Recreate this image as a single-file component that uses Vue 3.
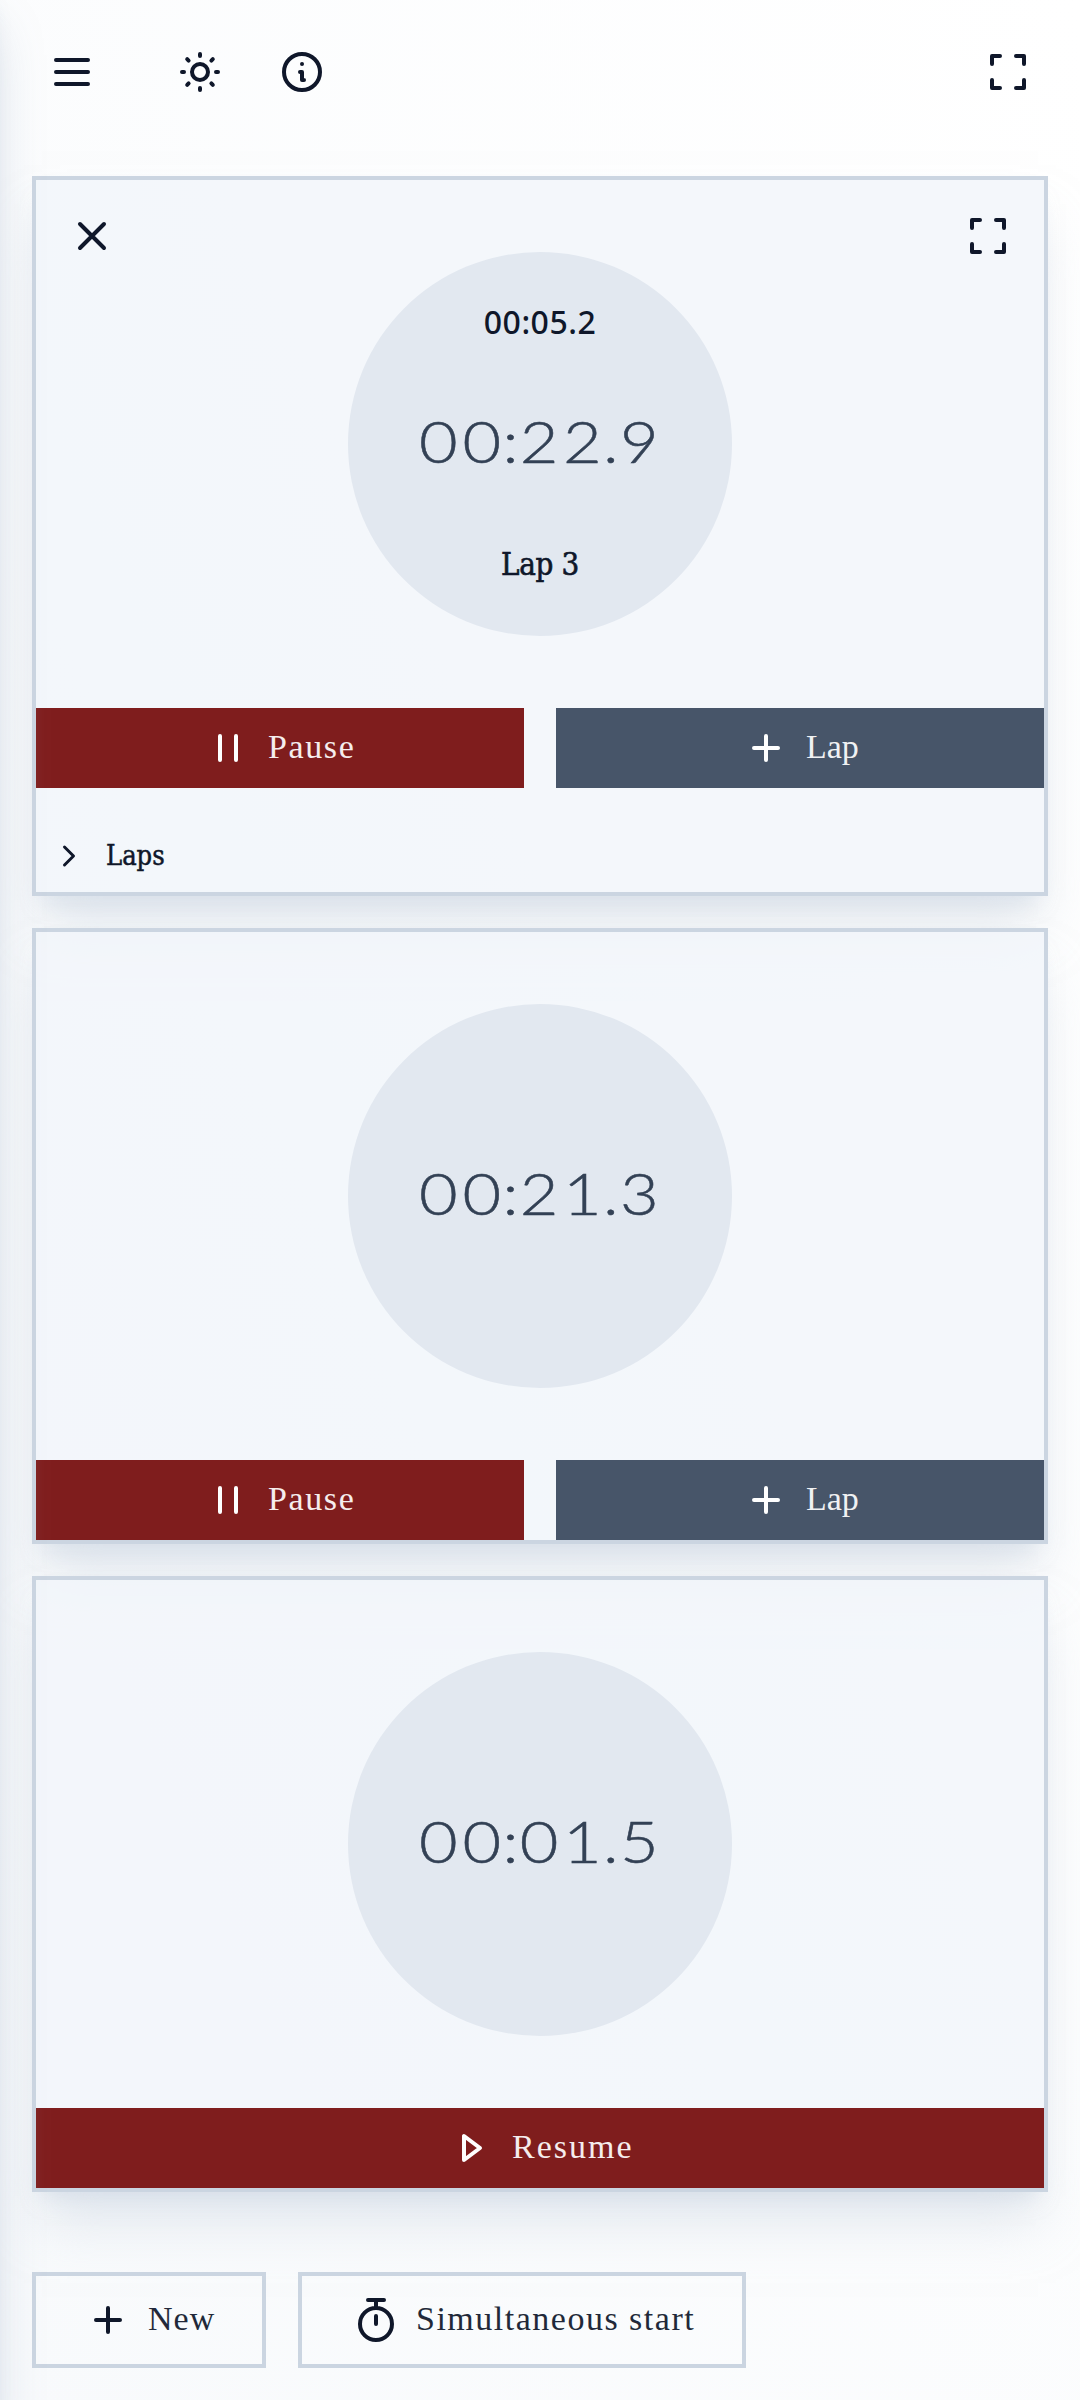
<script setup>
import { h } from 'vue'

const paths = {
  menu: 'M4 6h16M4 12h16M4 18h16',
  sun: 'M16 12a4 4 0 1 1-8 0a4 4 0 0 1 8 0M3 12h1M12 3v1M20 12h1M12 20v1M5.6 5.6l.7.7M18.4 5.6l-.7.7M17.7 17.7l.7.7M6.3 17.7l-.7.7',
  info: 'M21 12a9 9 0 1 1-18 0a9 9 0 0 1 18 0M12 8h.01M11 12h1v4h1',
  maximize: 'M4 8V4h4M16 4h4v4M20 16v4h-4M8 20H4v-4',
  close: 'M18 6L6 18M6 6l12 12',
  pause: 'M8 6v12M16 6v12',
  play: 'M8 6v12l8-6z',
  plus: 'M12 6v12M6 12h12',
  chevron: 'M9 6l6 6l-6 6',
  stopwatch: 'M20 14a8 8 0 1 1-16 0a8 8 0 0 1 16 0M8 2h8M12 2v4M12 10v4',
}

const Icon = (props) =>
  h(
    'svg',
    {
      width: props.size || 48,
      height: props.size || 48,
      viewBox: '0 0 24 24',
      fill: 'none',
      stroke: 'currentColor',
      'stroke-width': 2,
      'stroke-linecap': 'round',
      'stroke-linejoin': 'round',
      overflow: 'visible',
    },
    [h('path', { d: paths[props.name] })]
  )
Icon.props = ['name', 'size']

const watches = [
  { id: 1, time: ['00', '22', '9'], lapTime: '00:05.2', lap: 'Lap 3', running: true, controls: true },
  { id: 2, time: ['00', '21', '3'], running: true },
  { id: 3, time: ['00', '01', '5'], running: false },
]
</script>

<template>
  <div class="page">
    <aside class="drawer"></aside>
    <header class="topbar">
      <button class="icon-btn menu"><Icon name="menu" /></button>
      <button class="icon-btn sun"><Icon name="sun" /></button>
      <button class="icon-btn"><Icon name="info" /></button>
      <button class="icon-btn full"><Icon name="maximize" /></button>
    </header>

    <main class="list">
      <section v-for="w in watches" :key="w.id" class="card">
        <div class="face">
          <button v-if="w.controls" class="icon-btn corner left"><Icon name="close" /></button>
          <button v-if="w.controls" class="icon-btn corner right"><Icon name="maximize" /></button>
          <div class="dial">
            <div class="small lap-time">{{ w.lapTime }}</div>
            <div class="time">{{ w.time[0] }}<span class="sep">:</span>{{ w.time[1] }}<span class="sep">.</span>{{ w.time[2] }}</div>
            <div class="small lap-name">{{ w.lap }}</div>
          </div>
        </div>
        <div class="actions">
          <template v-if="w.running">
            <button class="btn red"><Icon name="pause" /><span class="label pause">Pause</span></button>
            <button class="btn slate"><Icon name="plus" /><span class="label lap">Lap</span></button>
          </template>
          <button v-else class="btn red"><Icon name="play" /><span class="label resume">Resume</span></button>
        </div>
        <div v-if="w.lap" class="laps"><Icon name="chevron" :size="36" /><span>Laps</span></div>
      </section>
    </main>

    <footer class="bottom">
      <button class="outline"><Icon name="plus" /><span class="label new">New</span></button>
      <button class="outline wide"><Icon name="stopwatch" /><span class="label simul">Simultaneous start</span></button>
    </footer>
  </div>
</template>

<style>
body {
  background: #fff;
}
</style>

<style scoped>
.page {
  box-sizing: border-box;
  position: relative;
  width: 1080px;
  height: 2400px;
  padding: 0 32px;
  overflow: hidden;
  color: #0f172a;
  background: linear-gradient(to top right, #f8fafc, #fff);
  font-family: 'Liberation Serif', serif;
}
button {
  margin: 0;
  padding: 0;
  border: 0;
  background: none;
  color: inherit;
  font: inherit;
}
svg {
  display: block;
  flex: none;
}
.drawer {
  position: absolute;
  z-index: 5;
  left: -400px;
  top: -20px;
  width: 400px;
  height: 2440px;
  box-shadow: 0 40px 50px -10px rgba(203, 213, 225, 0.85), 0 16px 20px -12px rgba(203, 213, 225, 0.85);
}
.topbar {
  display: flex;
  align-items: center;
  height: 144px;
  padding: 0 16px;
}
.icon-btn {
  width: 48px;
  height: 48px;
}
.menu {
  margin-right: 80px;
}
.sun {
  margin-right: 54px;
}
.full {
  margin-left: auto;
}
.list {
  display: flex;
  flex-direction: column;
  gap: 32px;
  padding-top: 32px;
}
.card {
  border: 4px solid #cbd5e1;
  background: rgba(241, 245, 250, 0.8);
  box-shadow: 0 40px 50px -10px rgba(203, 213, 225, 0.5), 0 16px 20px -12px rgba(203, 213, 225, 0.55);
}
.face {
  position: relative;
  display: flex;
  justify-content: center;
  padding: 72px 0;
}
.corner {
  position: absolute;
  top: 32px;
}
.left {
  left: 32px;
}
.right {
  right: 32px;
}
.dial {
  display: grid;
  grid-template-rows: 144px 96px 144px;
  justify-items: center;
  width: 384px;
  height: 384px;
  border-radius: 50%;
  background: #e2e8f0;
}
.small {
  font-size: 30px;
  line-height: 48px;
  white-space: nowrap;
}
.lap-time {
  padding-top: 46px;
  font-family: 'Noto Sans', sans-serif;
  font-weight: 500;
  font-size: 32px;
  letter-spacing: 0.5px;
}
.lap-name {
  padding-top: 48px;
  font-family: 'DejaVu Serif Condensed', 'DejaVu Serif', serif;
  font-stretch: condensed;
  font-size: 31px;
  letter-spacing: -0.3px;
  -webkit-text-stroke: 0.6px currentColor;
}
.time {
  margin: -3px 0 3px 3px;
  color: #334155;
  font-family: Lato, sans-serif;
  font-weight: 300;
  font-size: 58px;
  line-height: 96px;
  letter-spacing: 4.1px;
  white-space: nowrap;
  transform: scaleX(1.15);
  -webkit-text-stroke: 0.5px currentColor;
}
.sep {
  margin: 0 -3px;
}
.actions {
  display: flex;
  gap: 32px;
}
.btn {
  display: flex;
  flex: 1;
  align-items: center;
  justify-content: center;
  gap: 16px;
  height: 80px;
  color: #fff;
}
.red {
  background: #7f1d1d;
}
.slate {
  background: #475569;
}
.label {
  padding-bottom: 2px;
  font-size: 34px;
  line-height: 46px;
  text-align: left;
  white-space: nowrap;
  opacity: 0.92;
}
.pause {
  width: 88px;
  letter-spacing: 1.6px;
}
.lap {
  width: 52px;
}
.resume {
  width: 120px;
  letter-spacing: 2px;
}
.new {
  width: 66px;
  letter-spacing: 1px;
}
.simul {
  width: 278px;
  letter-spacing: 1.5px;
}
.laps {
  display: flex;
  align-items: center;
  gap: 19px;
  height: 72px;
  padding: 32px 0 0 15px;
  font-family: 'DejaVu Serif Condensed', 'DejaVu Serif', serif;
  font-stretch: condensed;
  font-size: 27px;
  -webkit-text-stroke: 0.5px currentColor;
}
.laps span {
  padding-bottom: 2px;
}
.bottom {
  display: flex;
  gap: 32px;
  padding-top: 80px;
}
.outline {
  display: flex;
  align-items: center;
  gap: 16px;
  height: 96px;
  padding: 0 48px;
  border: 4px solid #cbd5e1;
  box-sizing: border-box;
}
.wide {
  padding-left: 50px;
}
</style>
